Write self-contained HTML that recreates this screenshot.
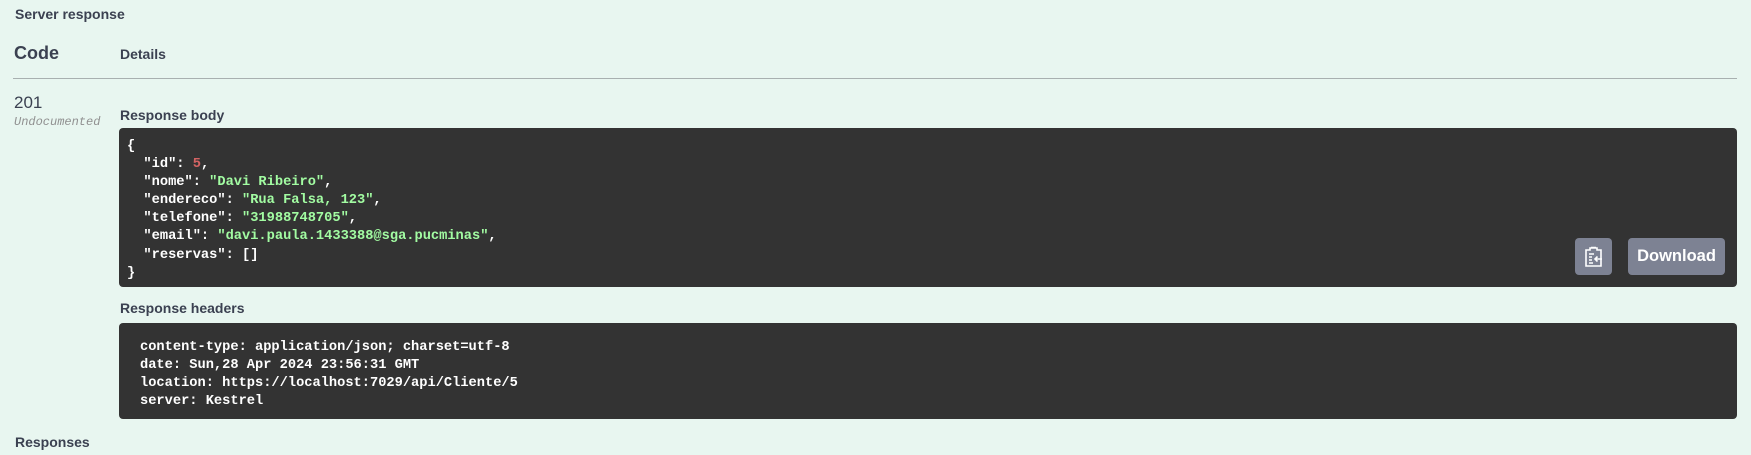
<!DOCTYPE html>
<html><head><meta charset="utf-8"><style>
body{margin:0;width:1751px;height:455px;background:#e8f6f0;font-family:"Liberation Sans",sans-serif;color:#3b4151;position:relative;overflow:hidden}
.a{position:absolute;white-space:nowrap}
.h{font-weight:bold;font-size:14px}
pre{margin:0;font-family:"Liberation Mono",monospace;font-weight:bold;font-size:13.7px;line-height:18.1px;color:#fff}
.box{position:absolute;left:119px;right:14px;background:#333;border-radius:4px}
.s{color:#a2fca2}.n{color:#d36363}
.btn{position:absolute;background:#7d8293;border-radius:4px;top:238px;height:37px}
</style></head><body>
<div class="a h" style="left:15px;top:6px">Server response</div>
<div class="a" style="left:14px;top:43px;font-size:18px;font-weight:bold">Code</div>
<div class="a h" style="left:120px;top:46px">Details</div>
<div class="a" style="left:13px;top:78px;width:1724px;border-top:1px solid #a8b0b0"></div>
<div class="a" style="left:14px;top:93px;font-size:17px">201</div>
<div class="a" style="left:14px;top:115px;font-family:'Liberation Mono',monospace;font-style:italic;font-size:12px;color:#909090">Undocumented</div>
<div class="a h" style="left:120px;top:107px">Response body</div>
<div class="box" style="top:128px;height:159px">
<pre style="position:absolute;left:8px;top:10px">{
  "id": <span class="n">5</span>,
  "nome": <span class="s">"Davi Ribeiro"</span>,
  "endereco": <span class="s">"Rua Falsa, 123"</span>,
  "telefone": <span class="s">"31988748705"</span>,
  "email": <span class="s">"davi.paula.1433388@sga.pucminas"</span>,
  "reservas": []
}</pre></div>
<div class="btn" style="left:1575px;width:37px"><svg width="37" height="37" viewBox="0 0 37 37" fill="none" stroke="#fff" stroke-width="1.6"><path d="M11 12h4v-2h7v2h4v16H11z"/><path d="M16 9.5h5M14 16h5M14 19h3M14 22h3M14 25h4M27 21h-7M22.5 18.5L20 21l2.5 2.5"/></svg></div>
<div class="btn" style="left:1628px;width:97px;color:#fff;font-weight:bold;font-size:16.5px;line-height:37px;text-align:center">Download</div>
<div class="a h" style="left:120px;top:300px">Response headers</div>
<div class="box" style="top:323px;height:96px">
<pre style="position:absolute;left:21px;top:16px">content-type: application/json; charset=utf-8
date: Sun,28 Apr 2024 23:56:31 GMT
location: https://localhost:7029/api/Cliente/5
server: Kestrel</pre></div>
<div class="a h" style="left:15px;top:434px">Responses</div>
</body></html>
